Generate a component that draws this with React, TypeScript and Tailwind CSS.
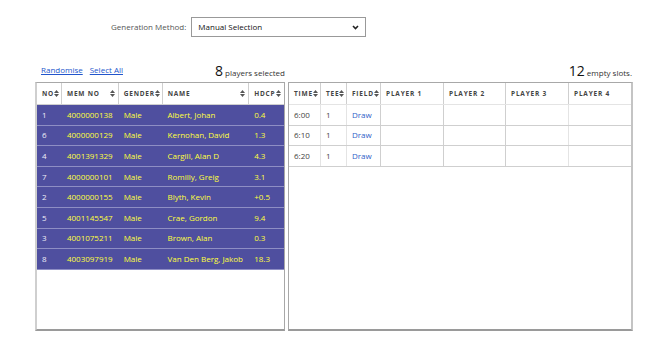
const font = { fontFamily: '"Open Sans", "Noto Sans", sans-serif' }

interface Player { no: number; mem: string; name: string; hdcp: string }

const players: Player[] = [
  { no: 1, mem: "4000000138", name: "Albert, Johan", hdcp: "0.4" },
  { no: 6, mem: "4000000129", name: "Kernohan, David", hdcp: "1.3" },
  { no: 4, mem: "4001391329", name: "Cargill, Alan D", hdcp: "4.3" },
  { no: 7, mem: "4000000101", name: "Romilly, Greig", hdcp: "3.1" },
  { no: 2, mem: "4000000155", name: "Blyth, Kevin", hdcp: "+0.5" },
  { no: 5, mem: "4001145547", name: "Crae, Gordon", hdcp: "9.4" },
  { no: 3, mem: "4001075211", name: "Brown, Alan", hdcp: "0.3" },
  { no: 8, mem: "4003097919", name: "Van Den Berg, Jakob", hdcp: "18.3" },
]

const slots = ["6:00", "6:10", "6:20"]

function SortIcon() {
  return (
    <svg width="5" height="7" viewBox="0 0 5 7" className="shrink-0">
      <path d="M2.5 0 L5 3 H0 Z" fill="#555" />
      <path d="M2.5 7 L5 4 H0 Z" fill="#555" />
    </svg>
  )
}

function Th({ label, w, sort, last }: { label: string; w: number; sort?: boolean; last?: boolean }) {
  return (
    <div
      className={`flex items-center justify-between pl-[5px] pr-[3px] h-full ${last ? "" : "border-r border-[#cfcfcf]"}`}
      style={{ width: w }}
    >
      <span className="text-[6.5px] font-bold tracking-[0.8px] text-[#444]">{label}</span>
      {sort && <SortIcon />}
    </div>
  )
}

export default function App() {
  const left = [
    { label: "NO", w: 25 },
    { label: "MEM NO", w: 57 },
    { label: "GENDER", w: 44 },
    { label: "NAME", w: 87 },
    { label: "HDCP", w: 35 },
  ]
  const right = [
    { label: "TIME", w: 32, sort: true },
    { label: "TEE", w: 26, sort: true },
    { label: "FIELD", w: 34, sort: true },
    { label: "PLAYER 1", w: 63 },
    { label: "PLAYER 2", w: 62 },
    { label: "PLAYER 3", w: 63 },
    { label: "PLAYER 4", w: 62 },
  ]
  return (
    <div className="w-[672px] h-[338px] bg-white text-[#222] overflow-hidden" style={font}>
      <div className="flex items-center pt-[17px] pl-[111px] gap-[5px]">
        <span className="text-[8px] text-[#555]">Generation Method:</span>
        <div className="w-[175px] h-[20px] border border-[#999] flex items-center justify-between pl-[6px] pr-[6px]">
          <span className="text-[8px] text-[#111]">Manual Selection</span>
          <svg width="7" height="5" viewBox="0 0 7 5">
            <path d="M1 1 L3.5 3.5 L6 1" stroke="#222" strokeWidth="1.6" fill="none" />
          </svg>
        </div>
      </div>

      <div className="flex pl-[35px] pt-[25px] gap-[3px]">
        <div className="w-[250px]">
          <div className="flex items-end justify-between h-[20px] pb-[3px] pl-[6px]">
            <div className="flex gap-[7px] text-[8px] text-[#2255cc] mb-[3px]">
              <span className="underline">Randomise</span>
              <span className="underline">Select All</span>
            </div>
            <div className="flex items-baseline gap-[2px]">
              <span className="text-[14px] leading-none text-[#111]">8</span>
              <span className="text-[8px] text-[#333]">players selected</span>
            </div>
          </div>
          <div className="h-[249px] border border-[#a8a8a8] border-l-2 border-l-[#cfcfcf] border-b-2 border-b-[#9a9a9a]">
            <div className="flex h-[22px] border-b border-[#cfcfcf]">
              {left.map((c, i) => (
                <Th key={c.label} label={c.label} w={c.w} sort last={i === left.length - 1} />
              ))}
            </div>
            {players.map((p) => (
              <div key={p.no} className="flex h-[20.6px] bg-[#4f4f9f] border-b border-[#8e8ec4] text-[8px] text-[#ffff3c] items-center">
                <div className="w-[25px] pl-[5px] text-[#eeeef8]">{p.no}</div>
                <div className="w-[57px] pl-[5px]">{p.mem}</div>
                <div className="w-[44px] pl-[5px]">Male</div>
                <div className="w-[87px] pl-[5px]">{p.name}</div>
                <div className="w-[35px] pl-[5px]">{p.hdcp}</div>
              </div>
            ))}
          </div>
        </div>

        <div className="w-[345px]">
          <div className="flex items-end justify-end h-[20px] pb-[3px] pr-[1px]">
            <div className="flex items-baseline gap-[2px]">
              <span className="text-[14px] leading-none text-[#111]">12</span>
              <span className="text-[8px] text-[#333]">empty slots.</span>
            </div>
          </div>
          <div className="h-[249px] border border-[#a8a8a8] border-r-2 border-r-[#c4c4c4] border-b-2 border-b-[#9a9a9a]">
            <div className="flex h-[22px] border-b border-[#e4e4e4]">
              {right.map((c, i) => (
                <Th key={c.label} label={c.label} w={c.w} sort={c.sort} last={i === right.length - 1} />
              ))}
            </div>
            {slots.map((t) => (
              <div key={t} className="flex h-[20.6px] border-b border-[#cfcfcf] text-[8px] text-[#444] items-center">
                <div className="w-[32px] h-full flex items-center pl-[5px] border-r border-[#e4e4e4]">{t}</div>
                <div className="w-[26px] h-full flex items-center pl-[5px] border-r border-[#e4e4e4]">1</div>
                <div className="w-[34px] h-full flex items-center pl-[5px] border-r border-[#cfcfcf] text-[#3060c8]">Draw</div>
                <div className="w-[63px] h-full border-r border-[#cfcfcf]" />
                <div className="w-[62px] h-full border-r border-[#cfcfcf]" />
                <div className="w-[63px] h-full border-r border-[#e4e4e4]" />
                <div className="w-[62px] h-full" />
              </div>
            ))}
          </div>
        </div>
      </div>
    </div>
  )
}
